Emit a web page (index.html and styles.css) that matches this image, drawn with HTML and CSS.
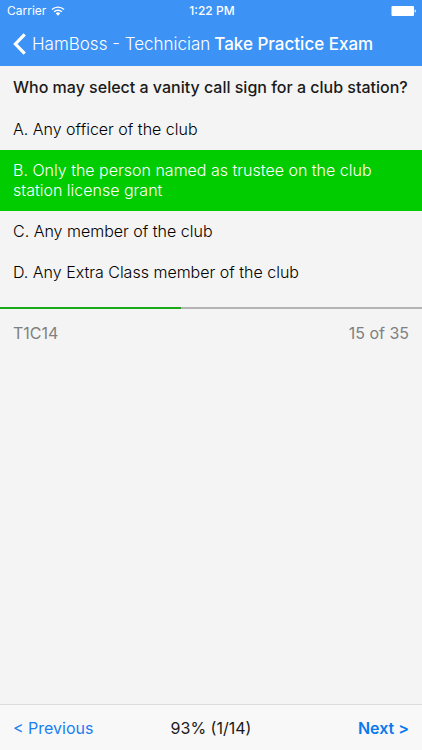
FILE: index.html
```html
<!DOCTYPE html>
<html lang="en">
<head>
<meta charset="utf-8">
<meta name="viewport" content="width=device-width, initial-scale=1">
<title>Take Practice Exam</title>
<link rel="stylesheet" href="styles.css">
</head>
<body>
<header class="header">
  <div class="status">
    <span class="carrier">Carrier
      <svg class="wifi" viewBox="0 0 14 10" aria-hidden="true"><path d="M1 3.6a8.5 8.5 0 0 1 12 0M3.1 5.8a5.5 5.5 0 0 1 7.8 0" fill="none" stroke="currentColor" stroke-width="1.4"/><path d="M4.8 7.4a3.1 3.1 0 0 1 4.4 0L7 9.8z" fill="currentColor"/></svg>
    </span>
    <time class="clock">1:22 PM</time>
    <svg class="battery" viewBox="0 0 26 10" aria-hidden="true"><rect x="0.5" y="0" width="22.5" height="10" rx="1" fill="currentColor"/><path d="M23.7 3.3a1.8 1.8 0 0 1 0 3.4z" fill="currentColor"/></svg>
  </div>
  <nav class="nav">
    <a class="back" href="#"><svg class="chevron" viewBox="0 0 13 22" aria-hidden="true"><path d="M11.7 1.3 2.4 11l9.3 9.7" fill="none" stroke="currentColor" stroke-width="3.2"/></svg>HamBoss - Technician</a>
    <h1 class="title">Take Practice Exam</h1>
  </nav>
</header>
<main class="main">
  <h2 class="question">Who may select a vanity call sign for a club station?</h2>
  <div class="answers">
    <button class="answer">A. Any officer of the club</button>
    <button class="answer correct">B. Only the person named as trustee on the club station license grant</button>
    <button class="answer">C. Any member of the club</button>
    <button class="answer">D. Any Extra Class member of the club</button>
  </div>
  <div class="progress" role="progressbar" aria-label="Exam progress" aria-valuemin="0" aria-valuemax="35" aria-valuenow="15"><div class="bar" style="width: 42.86%"></div></div>
  <div class="meta"><span>T1C14</span><span>15 of 35</span></div>
</main>
<footer class="footer">
  <button class="previous">&lt; Previous</button>
  <span class="score">93% (1/14)</span>
  <button class="next">Next &gt;</button>
</footer>
</body>
</html>
```

FILE: styles.css
```css
* { box-sizing: border-box; }
body {
  margin: 0;
  min-height: 100vh;
  display: flex;
  flex-direction: column;
  background: #f4f4f4;
  color: #1a1a1a;
  font: 16px/20px Inter, Roboto, sans-serif;
}
button {
  border: 0;
  margin: 0;
  padding: 0;
  background: none;
  color: inherit;
  font: inherit;
  text-align: left;
}
.header { background: #3d92f6; color: #fff; }
.status {
  display: grid;
  grid-template-columns: 1fr auto 1fr;
  align-items: center;
  height: 22px;
  padding: 0 5px 0 7px;
  font-size: 12px;
}
.carrier { display: flex; align-items: center; gap: 5px; }
.wifi { width: 14px; height: 10px; }
.clock { font-weight: 500; }
.battery { width: 26px; height: 10px; justify-self: end; }
.nav {
  display: flex;
  align-items: center;
  gap: 4px;
  height: 44px;
  padding: 0 13px;
  font-size: 17px;
  white-space: nowrap;
}
.back {
  display: flex;
  align-items: center;
  gap: 6px;
  color: inherit;
  font-weight: 300;
  text-decoration: none;
}
.chevron { width: 13px; height: 22px; }
.title { margin: 0; font-size: 17px; font-weight: 500; }
.main { flex: 1; }
.question {
  margin: 0;
  padding: 11px 13px 12px;
  font-size: 16px;
  font-weight: 500;
}
.answers { display: flex; flex-direction: column; }
.answer { padding: 10px 13px 11px; font-weight: 300; color: #000; }
.answer.correct { background: #00cc00; color: #fff; }
.progress { height: 2px; margin-top: 14px; background: #b4b4b4; }
.bar { height: 100%; background: #18a818; }
.meta {
  display: flex;
  justify-content: space-between;
  padding: 14px 13px;
  color: #808080;
}
.footer {
  display: grid;
  grid-template-columns: 1fr auto 1fr;
  align-items: center;
  height: 46px;
  padding: 0 13px;
  border-top: 1px solid #dcdcdc;
  background: #f8f8f8;
}
.previous { color: #1a7ff0; }
.next { color: #0a78f0; font-weight: 600; text-align: right; }
```
